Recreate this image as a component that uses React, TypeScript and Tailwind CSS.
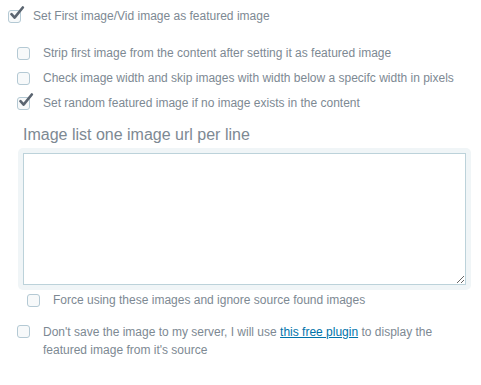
import React from "react";

function Box({ checked }: { checked?: boolean }) {
  return (
    <span className="relative inline-block w-[13px] h-[13px] shrink-0 rounded-[3px] border border-[#b4c9d4] bg-[#f7f9fa]">
      {checked && (
        <svg
          className="absolute left-[0px] top-[-5px]"
          width="16"
          height="16"
          viewBox="0 0 16 16"
        >
          <path d="M2.5 8.2 L5.6 11.6 L13.8 1.5" fill="none" stroke="#5a6470" strokeWidth="2.6" strokeLinecap="round" strokeLinejoin="round" />
        </svg>
      )}
    </span>
  );
}

export default function App() {
  return (
    <div
      className="w-[481px] h-[385px] bg-white text-[12px] text-[#7d8993] leading-[18px]"
      style={{ fontFamily: '"Liberation Sans", Arial, sans-serif' }}
    >
      <div className="flex items-center pt-[7px] pl-[8px]">
        <Box checked />
        <span className="ml-[12px]">Set First image/Vid image as featured image</span>
      </div>
      <div className="flex flex-col gap-[7px] pl-[17px] mt-[19px]">
        <div className="flex items-center">
          <Box />
          <span className="ml-[13px]">Strip first image from the content after setting it as featured image</span>
        </div>
        <div className="flex items-center">
          <Box />
          <span className="ml-[13px]">Check image width and skip images with width below a specifc width in pixels</span>
        </div>
        <div className="flex items-center">
          <Box checked />
          <span className="ml-[13px]">Set random featured image if no image exists in the content</span>
        </div>
      </div>
      <div className="pl-[23px] mt-[13px] text-[16px] leading-[20px]">Image list one image url per line</div>
      <div className="ml-[18px] mt-[3px] w-[453px] rounded-[5px] bg-[#f0f5f7] p-[5px]">
        <textarea
          className="block w-[443px] h-[132px] border border-[#bcd2da] bg-white outline-none resize-y"
          autoFocus
        />
      </div>
      <div className="flex items-center pl-[27px] mt-[1px]">
        <Box />
        <span className="ml-[13px]">Force using these images and ignore source found images</span>
      </div>
      <div className="flex items-start pl-[17px] mt-[14px]">
        <span className="mt-[2px]"><Box /></span>
        <span className="ml-[13px]">
          Don't save the image to my server, I will use{" "}
          <a href="#" className="text-[#0073aa] underline">this free plugin</a> to display the
          <br />
          featured image from it's source
        </span>
      </div>
    </div>
  );
}
